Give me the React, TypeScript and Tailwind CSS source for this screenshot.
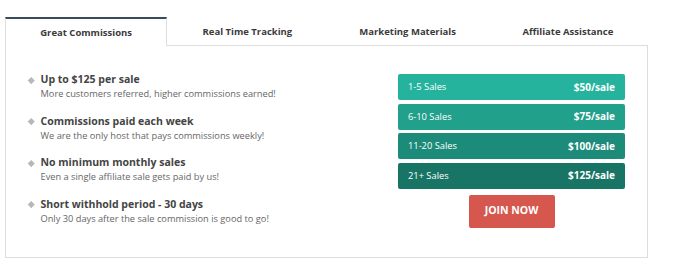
const TABS = ["Great Commissions", "Real Time Tracking", "Marketing Materials", "Affiliate Assistance"];

const PERKS = [
  { title: "Up to $125 per sale", text: "More customers referred, higher commissions earned!" },
  { title: "Commissions paid each week", text: "We are the only host that pays commissions weekly!" },
  { title: "No minimum monthly sales", text: "Even a single affiliate sale gets paid by us!" },
  { title: "Short withhold period - 30 days", text: "Only 30 days after the sale commission is good to go!" },
];

const TIERS = [
  { label: "1-5 Sales", price: "$50/sale", color: "bg-[#26b39e]" },
  { label: "6-10 Sales", price: "$75/sale", color: "bg-[#21a08b]" },
  { label: "11-20 Sales", price: "$100/sale", color: "bg-[#1d8b79]" },
  { label: "21+ Sales", price: "$125/sale", color: "bg-[#187565]" },
];

export default function App() {
  return (
    <div className="min-h-screen bg-white pl-[5px] pt-[17px] font-['Open_Sans',sans-serif]">
      <div className="w-[643px]">
        {/* Tabs */}
        <div className="flex h-[29px]">
          {TABS.map((t, i) => (
            <div
              key={t}
              className={
                i === 0
                  ? "flex-1 flex items-center justify-center pt-[1px] border-t-2 border-x border-t-[#3a4b5c] border-x-[#dddddd] bg-white text-[9.5px] font-bold text-[#3a3a3a]"
                  : "flex-1 flex items-center justify-center pt-[3px] border-b border-[#dddddd] text-[9.5px] font-bold text-[#3a3a3a]"
              }
            >
              {t}
            </div>
          ))}
        </div>

        {/* Panel */}
        <div className="flex justify-between border-x border-b border-[#dddddd] h-[212px] pl-[23px] pr-[22px] pt-[26px]">
          <ul className="flex flex-col gap-[12.5px]">
            {PERKS.map(p => (
              <li key={p.title} className="flex gap-[7px]">
                <span className="mt-[5.5px] w-[4.5px] h-[4.5px] rotate-45 bg-[#b8b8b8] shrink-0" />
                <div>
                  <p className="text-[10.5px] leading-[15px] font-bold text-[#444]">{p.title}</p>
                  <p className="text-[9.25px] leading-[14px] text-[#666]">{p.text}</p>
                </div>
              </li>
            ))}
          </ul>

          <div className="w-[227px] pt-[2px] flex flex-col">
            <div className="flex flex-col gap-[3.5px]">
              {TIERS.map(t => (
                <div key={t.label} className={`${t.color} h-[26px] rounded-[2px] flex items-center justify-between px-[10px] text-white`}>
                  <span className="text-[9.3px]">{t.label}</span>
                  <span className="text-[10px] font-bold">{t.price}</span>
                </div>
              ))}
            </div>
            <button className="mt-[6px] self-center w-[86px] h-[33px] rounded-[2px] bg-[#d5574d] text-white text-[10.5px] font-bold">
              JOIN NOW
            </button>
          </div>
        </div>
      </div>
    </div>
  );
}
